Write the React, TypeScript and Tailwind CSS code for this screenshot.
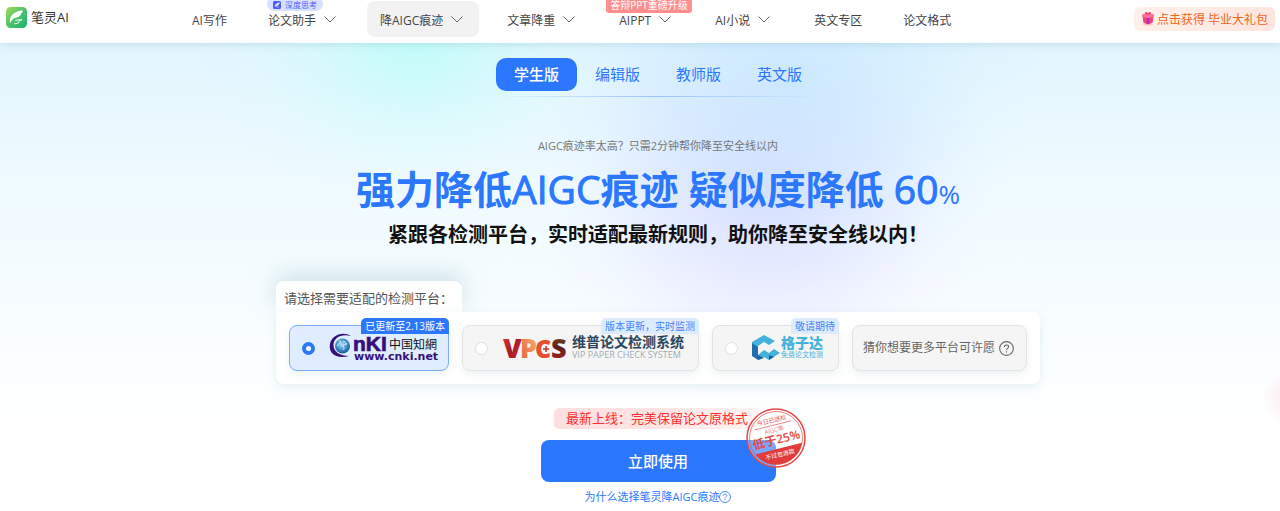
import { useState } from "react";
import type { ReactNode } from "react";
import clsx from "clsx";

interface NavItem {
  label: string;
  dropdown?: boolean;
  active?: boolean;
  badge?: ReactNode;
}

const navItems: NavItem[] = [
  { label: "AI写作" },
  {
    label: "论文助手",
    dropdown: true,
    badge: (
      <span className="absolute -top-1 left-3 flex h-[14px] items-center gap-1 rounded-full bg-[#d6e2ff] px-1.5 pt-0.5 text-[8px] whitespace-nowrap text-[#5b5cff]">
        <svg viewBox="0 0 8 8" className="size-2" aria-hidden="true">
          <rect width="8" height="8" rx="1.5" fill="#4f5bff" />
          <path d="M2 6C2.2 3.5 3.8 2 6.3 1.7 6 3.5 4.5 5 2.6 5.2M3.8 6H6" fill="#dfe5ff" stroke="#fff" strokeWidth=".5" />
        </svg>
        深度思考
      </span>
    ),
  },
  { label: "降AIGC痕迹", dropdown: true, active: true },
  { label: "文章降重", dropdown: true },
  {
    label: "AIPPT",
    dropdown: true,
    badge: (
      <span className="absolute -top-1 left-0 flex h-4 items-center rounded-[3px] bg-[#ff8f8f] px-1 text-[10px] whitespace-nowrap text-white">
        答辩PPT重磅升级
      </span>
    ),
  },
  { label: "AI小说", dropdown: true },
  { label: "英文专区" },
  { label: "论文格式" },
];

const versions = ["学生版", "编辑版", "教师版", "英文版"];

function Chevron() {
  return (
    <svg viewBox="0 0 12 7" className="mb-0.5 h-[7px] w-3" fill="none" stroke="#666" aria-hidden="true">
      <path d="M.5.5 6 6 11.5.5" />
    </svg>
  );
}

function BrandIcon() {
  return (
    <svg viewBox="0 0 21 21" className="size-[21px]" aria-hidden="true">
      <defs>
        <linearGradient id="brand" x1="0" y1="0" x2="1" y2="1">
          <stop offset="0" stopColor="#a6dc58" />
          <stop offset=".5" stopColor="#4dc26a" />
          <stop offset="1" stopColor="#12b573" />
        </linearGradient>
      </defs>
      <rect width="21" height="21" rx="4.5" fill="url(#brand)" />
      <path d="M4 16.5C3 9 8 3.5 17 3.5c-.3 1.500-1.200 2.700-2.500 3.500l1 .1c-1.500 2.400-4 3.400-6.500 3.900C6.500 11.800 5 13.500 4 16.500Z" fill="#fff" />
      <path d="M9.500 13.500c2-.8 4-1 6.500-.8-1.500 1-3 1.400-4.500 1.500M8 16.800c2.500-.2 4-.6 5.500-1.500" fill="none" stroke="#fff" strokeWidth=".9" />
    </svg>
  );
}

function GiftIcon() {
  return (
    <svg viewBox="0 0 14 15" className="mb-1 h-[15px] w-3.5" aria-hidden="true">
      <ellipse cx="7" cy="13" rx="5" ry="1.500" fill="#ffc3c0" />
      <path d="M1.500 4.500 7 6l5.500-1.500-.8 7L7 13.500l-4.700-2Z" fill="#f0437f" />
      <path d="M1 3.500 7 1.800l6 1.700-.3 2L7 7.200 1.300 5.500Z" fill="#ff7198" />
      <path d="M5.800 6.900v6l2.400 0V6.900Z" fill="#b52bb8" />
      <path d="M7 3.500C4.500 3.300 3.500 2 4.500 1.200 5.500.5 6.700 1.800 7 3.500 7.300 1.800 8.500.5 9.500 1.200 10.500 2 9.500 3.300 7 3.500Z" fill="#e8304f" />
    </svg>
  );
}

function HelpIcon({ className }: { className?: string }) {
  return (
    <svg viewBox="0 0 14 14" className={className} fill="none" stroke="currentColor" aria-hidden="true">
      <circle cx="7" cy="7" r="6.400" />
      <path d="M5 5.600C5 4.400 5.800 3.700 7 3.700s2 .7 2 1.700C9 6.700 7 6.800 7 8.500M7 9.600v1.100" />
    </svg>
  );
}

function CnkiLogo() {
  return (
    <svg viewBox="0 0 110 30" className="h-[30px] w-[110px] overflow-visible" role="img" aria-label="中国知网">
      <defs>
        <radialGradient id="globe" cx=".45" cy=".4" r=".6">
          <stop offset="0" stopColor="#b7e2f5" />
          <stop offset=".5" stopColor="#4e9dd2" />
          <stop offset="1" stopColor="#14599c" />
        </radialGradient>
      </defs>
      <circle cx="13.500" cy="13" r="7.500" fill="url(#globe)" />
      <path d="M9.500 8c2-1 2.500 0 1.500 2s-2.500 1-2.500 3M14 8c2 1 3 1 4 3-1.500 1-2.500-.5-3.500 1s1.500 3 0 5" fill="none" stroke="#d9f0f7" strokeWidth=".9" />
      <path d="M22 3C14-2 2 2 .8 12-.3 20 7 26.500 20 23 11 23 4.500 19 4.500 12 4.500 5 12 .5 22 3Z" fill="#36107a" />
      <g fill="#36107a" fontWeight="700">
        <text x="24" y="18" fontSize="21" fontFamily="Liberation Sans, sans-serif" stroke="#36107a" strokeWidth=".7">nKI</text>
        <text x="25" y="27" fontSize="11" fontFamily="DejaVu Sans, sans-serif">www.cnki.net</text>
      </g>
      <text x="60" y="16" fontSize="12" fill="#111" fontFamily="Noto Sans CJK TC, sans-serif">中国知網</text>
    </svg>
  );
}

function VpcsLogo() {
  return (
    <div className="flex items-center gap-1.5">
      <svg viewBox="0 0 64 24" className="h-6 w-16 overflow-visible" role="img" aria-label="VPCS">
        <defs>
          <linearGradient id="vRed" x1="0" y1="0" x2="1" y2="1">
            <stop offset="0" stopColor="#e8452f" />
            <stop offset=".5" stopColor="#a9182b" />
            <stop offset="1" stopColor="#e0342f" />
          </linearGradient>
          <linearGradient id="vOrange" x1="0" y1="1" x2="1" y2="0">
            <stop offset="0" stopColor="#e8532e" />
            <stop offset="1" stopColor="#f8bc82" />
          </linearGradient>
          <linearGradient id="vBrown" x1="0" y1="0" x2="0" y2="1">
            <stop offset="0" stopColor="#8a5a20" />
            <stop offset=".5" stopColor="#5c1f1c" />
            <stop offset="1" stopColor="#c22a28" />
          </linearGradient>
        </defs>
        <g fontFamily="Open Sans, sans-serif" fontWeight="800" fontSize="27">
          <text x="1" y="22" fill="url(#vRed)">V</text>
          <text x="18" y="22" fill="url(#vOrange)">P</text>
          <text x="49" y="22" fill="url(#vBrown)">S</text>
        </g>
        <text x="33" y="22" fill="#e2502f" fontFamily="Open Sans, sans-serif" fontWeight="800" fontSize="25">C</text>
        <path d="M44 10v6M41 13h6" stroke="#c5302c" strokeWidth="1.500" />
      </svg>
      <div className="flex flex-col">
        <span className="text-[14px] leading-[14px] font-bold text-[#29475f]">维普论文检测系统</span>
        <span className="text-[9px] leading-3 text-[#a3abb3]">VIP PAPER CHECK SYSTEM</span>
      </div>
    </div>
  );
}

function GezidaLogo() {
  return (
    <div className="flex items-center gap-px">
      <svg viewBox="0 0 28 26" className="h-[26px] w-7" aria-hidden="true">
        <path d="M0 7 12 0l11 6-6 4-5-3-6 4v9L0 14Z" fill="#45b2dc" />
        <path d="M0 8l6 4v13l-6-4Z" fill="#1f6fae" />
        <path d="M6 20l6-5 5 3 5-4 6 4-11 7-5-3-6 3Z" fill="#45b2dc" />
        <path d="M6 20l6 3-6 2ZM17 20l5 2-5 3Z" fill="#1d5f9c" />
      </svg>
      <div className="flex flex-col text-[#45b2dc]">
        <span className="text-[14px] leading-[14px] font-black">格子达</span>
        <span className="text-[7px] leading-2.5">免费论文检测</span>
      </div>
    </div>
  );
}

function Stamp() {
  return (
    <svg viewBox="0 0 60 60" className="absolute -top-8 -right-[30px] size-[60px]" role="img" aria-label="今日已送检 AIGC率低于25% 不过包退款">
      <defs>
        <clipPath id="stampClip">
          <circle cx="30" cy="30" r="26.500" />
        </clipPath>
      </defs>
      <circle cx="30" cy="30" r="29" fill="#fff" fillOpacity=".35" stroke="#e54848" strokeWidth="1.500" />
      <circle cx="30" cy="30" r="26.500" fill="none" stroke="#e54848" strokeWidth=".7" />
      <g transform="rotate(-14 30 30)" fill="#e54848" textAnchor="middle" fontFamily="Open Sans, Noto Sans CJK SC, sans-serif">
        <text x="30" y="14" fontSize="6">今日已送检</text>
        <path d="M11 17H49" stroke="#e54848" strokeWidth=".6" />
        <text x="30" y="24" fontSize="6" opacity=".7">AIGC率</text>
        <text x="30" y="36" fontSize="12" fontWeight="600">低于25%</text>
      </g>
      <g clipPath="url(#stampClip)">
        <g transform="rotate(-14 30 30)">
          <rect x="0" y="41" width="60" height="20" fill="#e03c3c" />
          <text x="30" y="49" fontSize="6" fill="#fff" textAnchor="middle" fontFamily="Noto Sans CJK SC, sans-serif">不过包退款</text>
        </g>
      </g>
    </svg>
  );
}

interface PlatformOptionProps {
  value: string;
  badge: string;
  width: string;
  selected: boolean;
  onSelect: (value: string) => void;
  children: ReactNode;
}

function PlatformOption({ value, badge, width, selected, onSelect, children }: PlatformOptionProps) {
  return (
    <label
      className={clsx(
        "relative flex h-[46px] items-center rounded-lg border pl-3 shadow-[0_3px_8px_rgba(120,160,170,0.15)]",
        width,
        selected ? "border-[#7aaefc] bg-[#e0ecff]" : "border-[#e2e3e5] bg-[#f5f5f5]",
      )}
    >
      <input
        type="radio"
        name="platform"
        value={value}
        aria-label={value}
        checked={selected}
        onChange={() => onSelect(value)}
        className="mr-3.5 size-[13px] shrink-0 appearance-none rounded-full border border-[#dedfe2] bg-white checked:border-4 checked:border-[#2b78ff]"
      />
      {children}
      <span
        className={clsx(
          "absolute -top-2 -right-px flex h-4 items-center rounded-t-[5px] px-1 text-[10px] whitespace-nowrap",
          selected ? "bg-[#2b78ff] text-white" : "bg-[#deebff] text-[#3f86fb]",
        )}
      >
        {badge}
      </span>
    </label>
  );
}

function Header() {
  return (
    <header className="relative z-10 flex h-[43px] items-start bg-white pr-[5px] pl-1.5 shadow-[0_1px_8px_rgba(90,160,180,0.25)]">
      <a href="#" className="flex w-[173px] shrink-0 items-center gap-1 pt-[7px] text-[13px] leading-[21px] text-[#333]">
        <BrandIcon />
        笔灵AI
      </a>
      <nav className="flex gap-[15px]">
        {navItems.map((item) => (
          <a
            key={item.label}
            href="#"
            className={clsx(
              "relative mt-px flex h-9 items-center gap-2 rounded-lg pt-[3px] pl-[13px] whitespace-nowrap",
              item.dropdown ? "pr-4" : "pr-[13px]",
              item.active && "bg-[#f2f2f2]",
            )}
          >
            {item.label}
            {item.dropdown && <Chevron />}
            {item.badge}
          </a>
        ))}
      </nav>
      <button className="mt-[7px] ml-auto flex h-6 items-center gap-0.5 rounded-md bg-linear-to-r from-[#fff1ea] to-[#ffe5df] px-[7px] pt-0.5 whitespace-nowrap text-[#f2641c]">
        <GiftIcon />
        点击获得 毕业大礼包
      </button>
    </header>
  );
}

export default function App() {
  const [version, setVersion] = useState("学生版");
  const [platform, setPlatform] = useState("知网");

  return (
    <div className="min-h-screen bg-white font-['Open_Sans','Noto_Sans_CJK_SC',sans-serif] text-[12px] text-[#444]">
      <Header />

      <main className="flex flex-col items-center bg-[radial-gradient(circle_at_101%_355px,rgba(255,205,215,0.5),transparent_30px),radial-gradient(ellipse_220px_170px_at_415px_0px,rgba(180,255,248,0.7),rgba(190,255,248,0.3)_45%,rgba(200,255,250,0.08)_75%,transparent),radial-gradient(ellipse_250px_210px_at_790px_40px,rgba(184,227,255,0.5),rgba(184,227,255,0.24)_50%,rgba(184,227,255,0.06)_78%,transparent),radial-gradient(ellipse_230px_210px_at_765px_155px,rgba(208,206,255,0.6),rgba(212,208,255,0.28)_50%,rgba(212,208,255,0.07)_78%,transparent),linear-gradient(#e2f5fe,#eefaff_28%,#f8fdff_60%,#fff_85%)] pt-[15px] pl-9">
        <div className="flex">
          {versions.map((name) => (
            <button
              key={name}
              onClick={() => setVersion(name)}
              className={clsx(
                "h-[33px] w-[81px] rounded-[10px] text-[15px]",
                name === version ? "bg-[#2b78ff] font-medium text-white" : "text-[#2b78ff]",
              )}
            >
              {name}
            </button>
          ))}
        </div>
        <div className="mt-[5px] h-px w-[325px] bg-linear-to-r from-transparent via-[#9ac3fb] to-transparent" />

        <p className="mt-10 text-[11px] leading-[18px] text-[#777]">AIGC痕迹率太高？只需2分钟帮你降至安全线以内</p>
        <h1 className="mt-2.5 h-12 text-[39px] leading-[48px] font-bold whitespace-nowrap text-[#2b78ff]">
          强力降低<span className="font-normal [-webkit-text-stroke:1px]">AIGC</span>痕迹 疑似度降低{" "}
          <span className="font-normal [-webkit-text-stroke:1px]">60</span>
          <span className="text-[26px] leading-none font-normal">%</span>
        </h1>
        <h2 className="mt-[9px] text-[20px] leading-[26px] font-bold whitespace-nowrap text-[#111]">
          紧跟各检测平台，实时适配最新规则，助你降至安全线以内！
        </h2>

        <fieldset className="mt-[33px]">
          <legend className="h-[31px] w-[186px] rounded-t-lg bg-white px-2 text-[13px] leading-[34px] whitespace-nowrap text-[#555] shadow-[0_-6px_24px_rgba(130,175,180,0.35)]">
            请选择需要适配的检测平台：
          </legend>
          <div className="relative flex gap-[13px] rounded-lg rounded-tl-none bg-white p-[13px] shadow-[0_3px_10px_rgba(130,180,190,0.2)]">
            <PlatformOption value="知网" badge="已更新至2.13版本" width="w-[160px]" selected={platform === "知网"} onSelect={setPlatform}>
              <CnkiLogo />
            </PlatformOption>
            <PlatformOption value="维普" badge="版本更新，实时监测" width="w-[237px]" selected={platform === "维普"} onSelect={setPlatform}>
              <VpcsLogo />
            </PlatformOption>
            <PlatformOption value="格子达" badge="敬请期待" width="w-[127px]" selected={platform === "格子达"} onSelect={setPlatform}>
              <GezidaLogo />
            </PlatformOption>
            <button className="flex h-[46px] w-[175px] items-center justify-between rounded-lg border border-[#e2e3e5] bg-[#f5f5f5] pr-3 pl-[10px] whitespace-nowrap text-[#666] shadow-[0_3px_8px_rgba(120,160,170,0.15)]">
              猜你想要更多平台可许愿
              <HelpIcon className="size-[15px]" />
            </button>
          </div>
        </fieldset>

        <p className="mt-6 h-[21px] w-[208px] rounded-[5px] bg-linear-to-r from-[#ffdfe0] via-[#ffe4e4] to-[#fff3f3] px-3 text-[13px] leading-[21px] whitespace-nowrap text-[#ff2f2f]">
          最新上线：完美保留论文原格式
        </p>
        <div className="relative mt-[11px]">
          <button className="h-[42px] w-[235px] rounded-lg bg-[#2b78ff] text-[15px] font-medium text-white">立即使用</button>
          <Stamp />
        </div>
        <a href="#" className="mt-1.5 flex items-center text-[11px] leading-[18px] text-[#2b78ff]">
          为什么选择笔灵降AIGC痕迹
          <HelpIcon className="size-3" />
        </a>
      </main>
    </div>
  );
}
